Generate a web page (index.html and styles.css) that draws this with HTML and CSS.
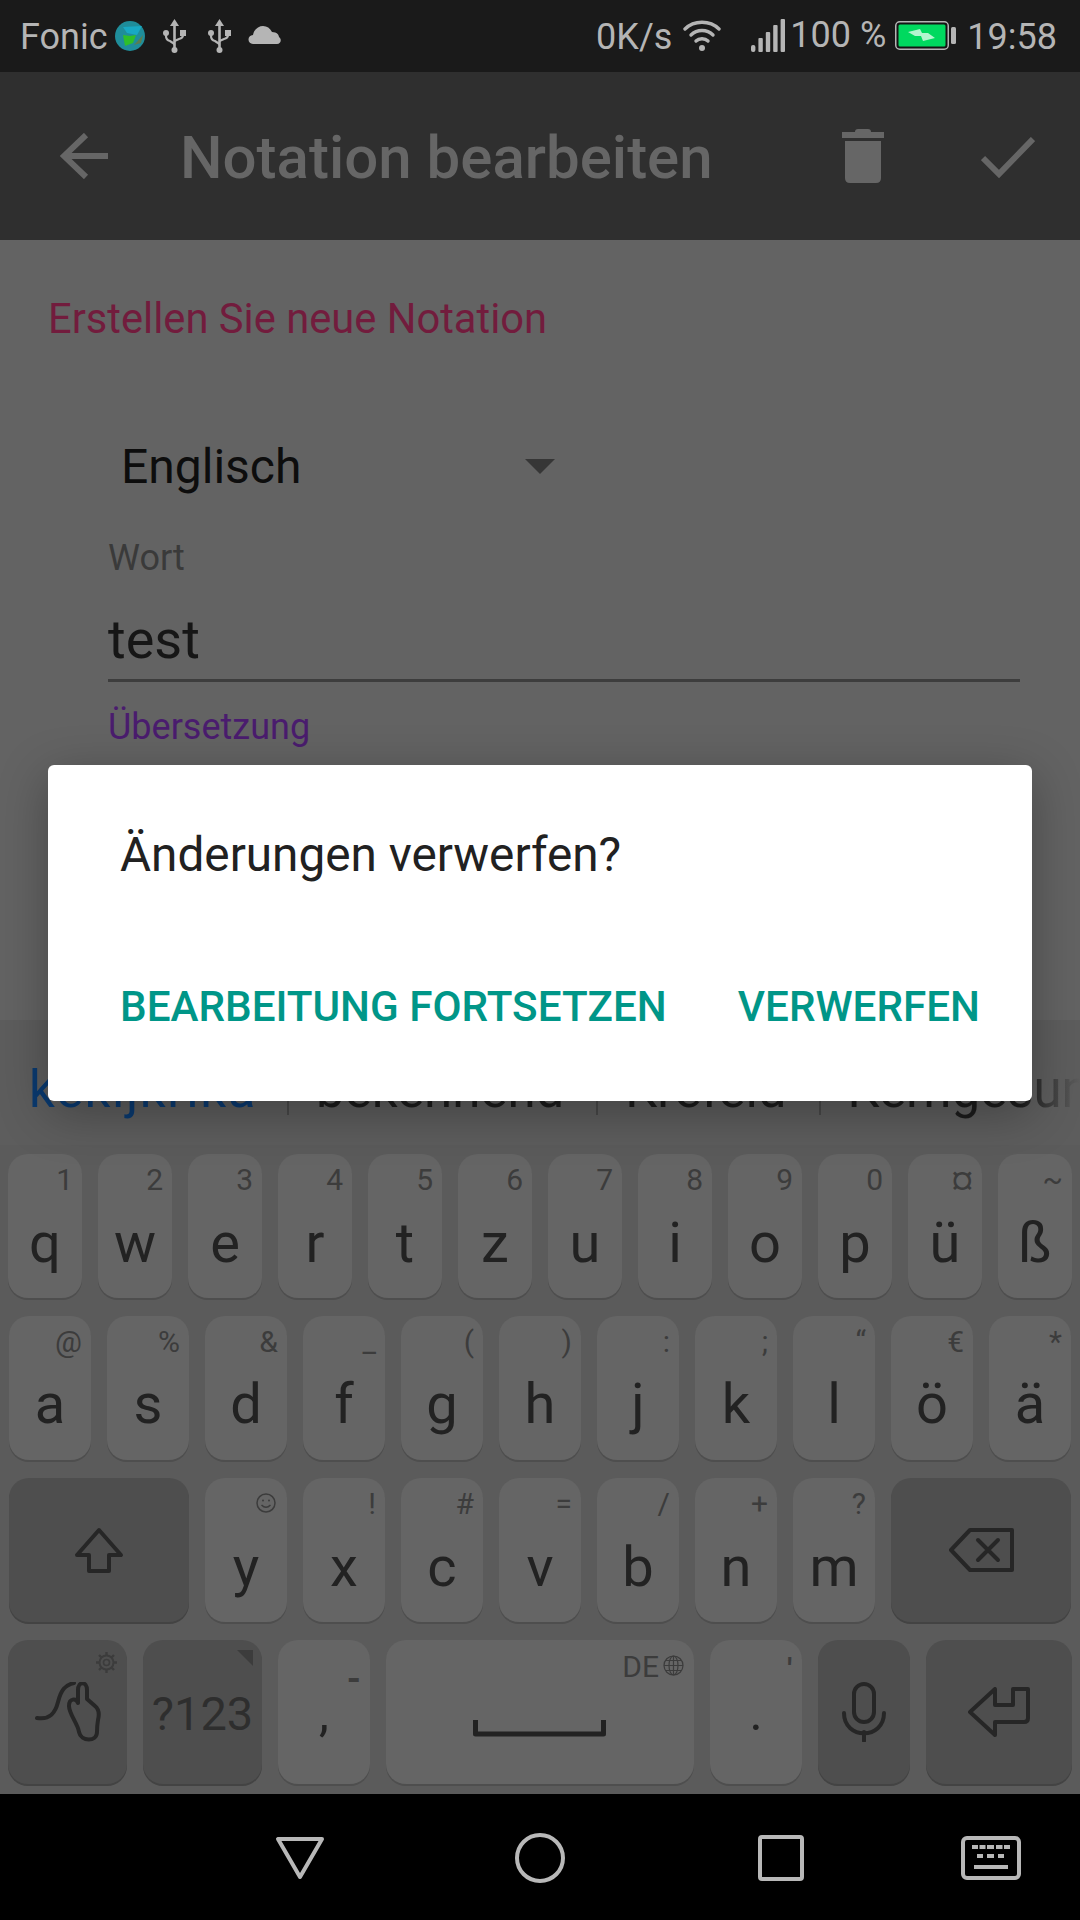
FILE: index.html
```html
<!DOCTYPE html>
<html lang="de">
<head>
  <meta charset="UTF-8">
  <meta name="viewport" content="width=device-width, initial-scale=1.0">
  <title>Notation bearbeiten</title>
  <link rel="stylesheet" href="styles.css">
</head>
<body>
  <div class="status">
    <span class="carrier">Fonic</span>
    <svg class="globe" width="30" height="30" viewBox="0 0 30 30">
      <circle cx="15" cy="15" r="15" fill="#1f8d9a"/>
      <path d="M8 6L27 5L22 14L12 12Z" fill="#18a9c4"/>
      <path d="M8 14L15 15L21 14L18 22L10 25Z" fill="#2ebf2a"/>
      <path d="M19 24L28 14L26 22Z" fill="#5b7d50"/>
    </svg>
    <svg class="usb" width="23" height="34" viewBox="0 0 23 34"><use href="#usb-shape"/></svg>
    <svg class="usb usb-2" width="23" height="34" viewBox="0 0 23 34"><use href="#usb-shape"/></svg>
    <svg class="cloud" width="33" height="18" viewBox="0 0 33 18">
      <path d="M5 18C-1 18-1 9 5 9C6 3 11 0 15 0C19 0 22 2 24 6C29 6 31 9 31 11C34 13 33 18 29 18Z" fill="#b5b5b5"/>
    </svg>
    <span class="net">0K/s</span>
    <svg class="wifi" width="38" height="33" viewBox="0 0 38 33" fill="none" stroke="#b5b5b5" stroke-width="3.4" stroke-linecap="round">
      <path d="M2 10C11 1 27 1 36 10"/>
      <path d="M8 16C14 10 24 10 30 16"/>
      <path d="M13 22C16 19 22 19 25 22"/>
      <circle cx="19" cy="29" r="3" fill="#b5b5b5" stroke="none"/>
    </svg>
    <svg class="signal" width="34" height="33" viewBox="0 0 34 33" fill="#b5b5b5">
      <rect x="0" y="26" width="4.4" height="7" rx="2"/>
      <rect x="7.4" y="19" width="4.4" height="14" rx="1"/>
      <rect x="14.8" y="13" width="4.4" height="20" rx="1"/>
      <rect x="22.2" y="6" width="4.4" height="27" rx="1"/>
      <rect x="29.6" y="0" width="4.4" height="33" rx="1"/>
    </svg>
    <span class="percent">100 %</span>
    <svg class="battery" width="61" height="29" viewBox="0 0 61 29">
      <rect x="0.75" y="0.75" width="52.5" height="27.5" rx="4" fill="#141414" stroke="#b5b5b5" stroke-width="1.5"/>
      <rect x="3.5" y="3.5" width="47" height="22" rx="1.5" fill="#00d95f"/>
      <path d="M13 11L25 8L27 12H33L40 17L28 20L26 15H20Z" fill="#b4f5cf"/>
      <rect x="56" y="6" width="5" height="17" rx="1.5" fill="#b5b5b5"/>
    </svg>
    <span class="clock">19:58</span>
  </div>

  <div class="toolbar">
    <svg class="back" width="48" height="46" viewBox="0 0 48 46" fill="none" stroke="#666" stroke-width="6">
      <path d="M26 2L4 23L26 44"/>
      <path d="M4 23H48"/>
    </svg>
    <span class="title">Notation bearbeiten</span>
    <svg class="trash" width="42" height="54" viewBox="0 0 42 54" fill="#666">
      <path d="M13 3Q13 0 16 0H26Q29 0 29 3H42V9H0V3Z"/>
      <path d="M3 12H39V49Q39 54 34 54H8Q3 54 3 49Z"/>
    </svg>
    <svg class="check" width="54" height="42" viewBox="0 0 54 42" fill="none" stroke="#666" stroke-width="6">
      <path d="M2 21L18 37L52 2"/>
    </svg>
  </div>

  <div class="content">
    <div class="heading">Erstellen Sie neue Notation</div>
    <div class="spinner">
      <span class="spinner-text">Englisch</span>
      <span class="spinner-arrow"></span>
    </div>
    <div class="label">Wort</div>
    <div class="field">test</div>
    <div class="label label-focus">Übersetzung</div>
  </div>

  <div class="suggest">
    <span class="word word-first">kekijkrika</span>
    <span class="sep sep-first"></span>
    <span class="word">bekennend</span>
    <span class="sep"></span>
    <span class="word">Krefeld</span>
    <span class="sep"></span>
    <span class="word">Kerngesun</span>
    <div class="suggest-fade"></div>
  </div>

  <div class="keyboard">
    <div class="row row-top">
      <div class="key">q<span class="hint">1</span></div>
      <div class="key">w<span class="hint">2</span></div>
      <div class="key">e<span class="hint">3</span></div>
      <div class="key">r<span class="hint">4</span></div>
      <div class="key">t<span class="hint">5</span></div>
      <div class="key">z<span class="hint">6</span></div>
      <div class="key">u<span class="hint">7</span></div>
      <div class="key">i<span class="hint">8</span></div>
      <div class="key">o<span class="hint">9</span></div>
      <div class="key">p<span class="hint">0</span></div>
      <div class="key">ü<span class="hint">¤</span></div>
      <div class="key">ß<span class="hint">~</span></div>
    </div>
    <div class="row row-home">
      <div class="key">a<span class="hint">@</span></div>
      <div class="key">s<span class="hint">%</span></div>
      <div class="key">d<span class="hint">&amp;</span></div>
      <div class="key">f<span class="hint">_</span></div>
      <div class="key">g<span class="hint">(</span></div>
      <div class="key">h<span class="hint">)</span></div>
      <div class="key">j<span class="hint">:</span></div>
      <div class="key">k<span class="hint">;</span></div>
      <div class="key">l<span class="hint">“</span></div>
      <div class="key">ö<span class="hint">€</span></div>
      <div class="key">ä<span class="hint">*</span></div>
    </div>
    <div class="row row-low">
      <div class="key key-dark key-icon w-180">
        <svg width="50" height="46" viewBox="0 0 50 46" fill="none" stroke="#262626" stroke-width="4" stroke-linejoin="round">
          <path d="M25 3L47 28H35V44H15V28H3Z"/>
        </svg>
      </div>
      <div class="key w-82">y
        <svg class="smiley" width="20" height="20" viewBox="0 0 20 20" fill="none" stroke="#3c3c3c" stroke-width="1.5">
          <circle cx="10" cy="10" r="9"/>
          <path d="M5.5 12Q10 16.5 14.5 12"/>
          <circle cx="7" cy="7.5" r="1" fill="#3c3c3c" stroke="none"/>
          <circle cx="13" cy="7.5" r="1" fill="#3c3c3c" stroke="none"/>
        </svg>
      </div>
      <div class="key w-82">x<span class="hint">!</span></div>
      <div class="key w-82">c<span class="hint">#</span></div>
      <div class="key w-82">v<span class="hint">=</span></div>
      <div class="key w-82">b<span class="hint">/</span></div>
      <div class="key w-82">n<span class="hint">+</span></div>
      <div class="key w-82">m<span class="hint">?</span></div>
      <div class="key key-dark key-icon w-180">
        <svg width="65" height="44" viewBox="0 0 65 44" fill="none" stroke="#262626" stroke-width="4" stroke-linejoin="round" stroke-linecap="round">
          <path d="M2 22L21 2H63V42H21Z"/>
          <path d="M29 12L49 32M49 12L29 32"/>
        </svg>
      </div>
    </div>
    <div class="row row-bottom">
      <div class="key key-dark key-icon w-119">
        <svg width="66" height="60" viewBox="0 0 66 60" fill="none" stroke="#262626" stroke-width="4" stroke-linecap="round" stroke-linejoin="round">
          <path d="M2 36C14 38 20 32 23 20C26 8 30 3 39 1"/>
          <path d="M43 21V8C43-1 52-1 52 8V17L60 24C65 28 64 34 63 38C62 44 62 48 62 50C62 60 46 60 44 50C43 42 34 32 34 24C34 16 41 16 43 21Z"/>
        </svg>
        <svg class="gear" width="21" height="21" viewBox="0 0 21 21" fill="none" stroke="#3c3c3c">
          <circle cx="10.5" cy="10.5" r="7" stroke-width="2"/>
          <circle cx="10.5" cy="10.5" r="3" stroke-width="1.6"/>
          <path d="M10.5 0V4M10.5 17V21M0 10.5H4M17 10.5H21M3 3L5.5 5.5M15.5 15.5L18 18M18 3L15.5 5.5M5.5 15.5L3 18" stroke-width="2.4"/>
        </svg>
      </div>
      <div class="key key-dark key-sym w-119">?123<span class="corner"></span></div>
      <div class="key key-punct w-92">,<span class="hint hint-dash">-</span></div>
      <div class="key key-space w-308">
        <svg class="space-mark" width="133" height="17" viewBox="0 0 133 17" fill="none" stroke="#222" stroke-width="5" stroke-linejoin="round">
          <path d="M2.5 0V14H130.5V0"/>
        </svg>
        <span class="lang">DE</span>
        <svg class="lang-globe" width="21" height="21" viewBox="0 0 21 21" fill="none" stroke="#3c3c3c" stroke-width="1.2">
          <circle cx="10.5" cy="10.5" r="9.5"/>
          <ellipse cx="10.5" cy="10.5" rx="4.5" ry="9.5"/>
          <path d="M10.5 1V20M1 10.5H20M2.5 5.5H18.5M2.5 15.5H18.5"/>
        </svg>
      </div>
      <div class="key key-punct w-92">.<span class="hint hint-tick">'</span></div>
      <div class="key key-dark key-icon w-92">
        <svg width="44" height="60" viewBox="0 0 44 60" fill="none" stroke="#262626" stroke-width="4" stroke-linecap="round">
          <rect x="12" y="2" width="20" height="38" rx="10"/>
          <path d="M2 31C2 58 42 58 42 31"/>
          <path d="M22 50V59"/>
        </svg>
      </div>
      <div class="key key-dark key-icon w-146">
        <svg width="62" height="50" viewBox="0 0 62 50" fill="none" stroke="#262626" stroke-width="4" stroke-linejoin="round">
          <path d="M2 25L27 2V18H45V2H60V31Q60 35 56 35H27V48Z"/>
        </svg>
      </div>
    </div>
  </div>

  <div class="nav">
    <svg class="nav-back" width="50" height="44" viewBox="0 0 50 44" fill="none" stroke="#b8b8b8" stroke-width="4" stroke-linejoin="round">
      <path d="M3 3H47L25 41Z"/>
    </svg>
    <svg class="nav-home" width="50" height="50" viewBox="0 0 50 50" fill="none" stroke="#b8b8b8" stroke-width="4">
      <circle cx="25" cy="25" r="23"/>
    </svg>
    <svg class="nav-recent" width="46" height="46" viewBox="0 0 46 46" fill="none" stroke="#b8b8b8" stroke-width="4" stroke-linejoin="round">
      <rect x="2" y="2" width="42" height="42" rx="2"/>
    </svg>
    <svg class="nav-kbd" width="60" height="44" viewBox="0 0 60 44" fill="none">
      <rect x="2" y="2" width="56" height="40" rx="4" stroke="#b8b8b8" stroke-width="4"/>
      <path d="M11 11H17M18.5 11H24.5M26 11H33M35 11H41.5M43 11H49M16 20H22M26 20H33M37 20H43M13 31H47" stroke="#b8b8b8" stroke-width="4"/>
    </svg>
  </div>

  <div class="dialog">
    <div class="dialog-title">Änderungen verwerfen?</div>
    <div class="dialog-actions">
      <span class="action">BEARBEITUNG FORTSETZEN</span>
      <span class="action">VERWERFEN</span>
    </div>
  </div>

  <svg class="defs" width="0" height="0">
    <defs>
      <g id="usb-shape" fill="#b5b5b5">
        <path d="M11.5 0L16 7H7Z"/>
        <rect x="10.2" y="6" width="2.6" height="25"/>
        <circle cx="11.5" cy="31" r="3"/>
        <circle cx="3" cy="14" r="3"/>
        <rect x="17" y="11" width="6" height="6"/>
        <path d="M3 15V17Q3 21 7 22L11.5 25" fill="none" stroke="#b5b5b5" stroke-width="2.2"/>
        <path d="M20 15V16Q20 19 16 20L11.5 22" fill="none" stroke="#b5b5b5" stroke-width="2.2"/>
      </g>
    </defs>
  </svg>
</body>
</html>
```

FILE: styles.css
```css
* {
  box-sizing: border-box;
}

body {
  position: relative;
  display: flex;
  flex-direction: column;
  width: 1080px;
  height: 1920px;
  margin: 0;
  overflow: hidden;
  background-color: #636363;
  font-family: Roboto, "Noto Sans", sans-serif;
}

.defs {
  position: absolute;
}

/* status bar */
.status {
  display: flex;
  align-items: flex-start;
  flex: 0 0 72px;
  padding-left: 20px;
  background-color: #1a1a1a;
  color: #b5b5b5;
  font-size: 36px;
  line-height: 42px;
}

.carrier {
  margin-top: 16px;
}

.globe {
  margin: 21px 0 0 7px;
}

.usb {
  margin: 19px 0 0 18px;
}

.usb-2 {
  margin-left: 22px;
}

.cloud {
  margin: 26px 0 0 17px;
}

.net {
  margin: 16px 0 0 auto;
}

.wifi {
  margin: 19px 0 0 11px;
}

.signal {
  margin: 19px 0 0 30px;
}

.percent {
  margin: 14px 0 0 5px;
}

.battery {
  margin: 21px 0 0 9px;
}

.clock {
  margin: 16px 23px 0 11px;
}

/* toolbar */
.toolbar {
  display: flex;
  align-items: flex-start;
  flex: 0 0 168px;
  background-color: #2f2f2f;
}

.back {
  margin: 61px 0 0 60px;
}

.title {
  margin: 51px 0 0 72px;
  color: #666;
  font-size: 60px;
  font-weight: 500;
  line-height: 70px;
}

.trash {
  margin: 57px 0 0 auto;
}

.check {
  margin: 65px 45px 0 97px;
}

/* form behind the dialog */
.content {
  flex: 0 0 780px;
  padding: 0 60px 0 108px;
}

.heading {
  margin: 54px 0 0 -60px;
  color: #721c3d;
  font-size: 41.7px;
  line-height: 49px;
}

.spinner {
  display: flex;
  align-items: center;
  margin-top: 96px;
  padding-left: 13px;
  color: #0d0d0d;
  font-size: 48px;
  line-height: 56px;
}

.spinner-arrow {
  width: 0;
  height: 0;
  margin: -2px 0 0 224px;
  border-top: 15px solid #363636;
  border-left: 15px solid transparent;
  border-right: 15px solid transparent;
}

.label {
  margin-top: 42px;
  color: #3a3a3a;
  font-size: 36px;
  line-height: 42px;
}

.field {
  margin-top: 30px;
  height: 73px;
  border-bottom: 3px solid #3d3d3d;
  color: #161616;
  font-size: 54px;
  line-height: 62px;
}

.label-focus {
  margin-top: 24px;
  color: #4a1c6e;
}

/* suggestion strip */
.suggest {
  position: relative;
  display: flex;
  align-items: flex-start;
  flex: 0 0 125px;
  overflow: hidden;
  background-color: #5d5d5d;
  color: #1c1c1c;
  font-size: 51px;
  line-height: 60px;
  white-space: nowrap;
}

.word {
  margin: 40px 0 0 27px;
}

.word-first {
  margin-left: 29px;
  color: #0a3a70;
  letter-spacing: 1.6px;
}

.sep {
  flex: 0 0 2px;
  height: 16px;
  margin: 79px 0 0 32px;
  background-color: #484848;
}

.sep-first {
  margin-left: 30px;
}

.suggest-fade {
  position: absolute;
  top: 0;
  right: 0;
  bottom: 0;
  width: 60px;
  background: linear-gradient(to right, rgba(93, 93, 93, 0), #5d5d5d);
}

/* keyboard */
.keyboard {
  display: flex;
  flex-direction: column;
  gap: 18px;
  flex: 0 0 649px;
  padding-top: 9px;
  background-color: #5b5b5b;
}

.row {
  display: grid;
  gap: 16px;
  height: 144px;
  padding: 0 8px;
}

.row-top {
  grid-template-columns: repeat(12, 1fr);
}

.row-home {
  grid-template-columns: repeat(11, 82px);
  padding-left: 9px;
}

.row-home .key {
  padding-top: 56px;
}

.row-low,
.row-bottom {
  display: flex;
}

.row-low {
  padding-left: 9px;
}

.key {
  position: relative;
  display: flex;
  justify-content: center;
  padding-top: 57px;
  background-color: #656565;
  border-radius: 20px;
  box-shadow: 0 2px 0 #4e4e4e;
  color: #222;
  font-size: 56px;
  line-height: 64px;
}

.key-dark {
  background-color: #4e4e4e;
  box-shadow: 0 2px 0 #434343;
}

.key-icon {
  align-items: center;
  padding-top: 0;
}

.w-82 {
  flex: 0 0 82px;
}

.w-92 {
  flex: 0 0 92px;
}

.w-119 {
  flex: 0 0 119px;
}

.w-146 {
  flex: 0 0 146px;
}

.w-180 {
  flex: 0 0 180px;
}

.w-308 {
  flex: 0 0 308px;
}

.hint {
  position: absolute;
  top: 11px;
  right: 9px;
  color: #3c3c3c;
  font-size: 30px;
  line-height: 30px;
}

.smiley {
  position: absolute;
  top: 15px;
  right: 11px;
}

.key-sym {
  padding-top: 47px;
  color: #2e2e2e;
  font-size: 47px;
  line-height: 54px;
}

.corner {
  position: absolute;
  top: 10px;
  right: 9px;
  width: 0;
  height: 0;
  border-top: 16px solid #3c3c3c;
  border-left: 16px solid transparent;
}

.key-punct {
  padding-top: 41px;
  font-size: 50px;
}

.hint-dash {
  top: 24px;
  right: 9px;
  font-size: 36px;
  font-weight: 700;
}

.hint-tick {
  top: 14px;
  right: 10px;
  font-weight: 700;
}

.gear {
  position: absolute;
  top: 12px;
  right: 10px;
}

.space-mark {
  position: absolute;
  top: 80px;
  left: 87px;
}

.lang {
  position: absolute;
  top: 12px;
  right: 35px;
  color: #3c3c3c;
  font-size: 30px;
  line-height: 30px;
}

.lang-globe {
  position: absolute;
  top: 15px;
  right: 10px;
}

/* nav bar */
.nav {
  display: flex;
  align-items: center;
  flex: 0 0 126px;
  padding-top: 2px;
  background-color: #000;
}

.nav-back {
  margin-left: 275px;
}

.nav-home {
  margin-left: 190px;
}

.nav-recent {
  margin-left: 193px;
}

.nav-kbd {
  margin-left: 157px;
}

/* dialog */
.dialog {
  position: absolute;
  top: 765px;
  left: 48px;
  width: 984px;
  height: 336px;
  padding: 62px 52px 0 72px;
  background-color: #fff;
  border-radius: 6px;
  box-shadow: 0 12px 50px rgba(0, 0, 0, 0.3);
}

.dialog-title {
  color: #212121;
  font-size: 47.7px;
  line-height: 56px;
}

.dialog-actions {
  display: flex;
  justify-content: space-between;
  margin-top: 99px;
}

.action {
  color: #009688;
  font-size: 42.2px;
  font-weight: 500;
  line-height: 50px;
}
```
